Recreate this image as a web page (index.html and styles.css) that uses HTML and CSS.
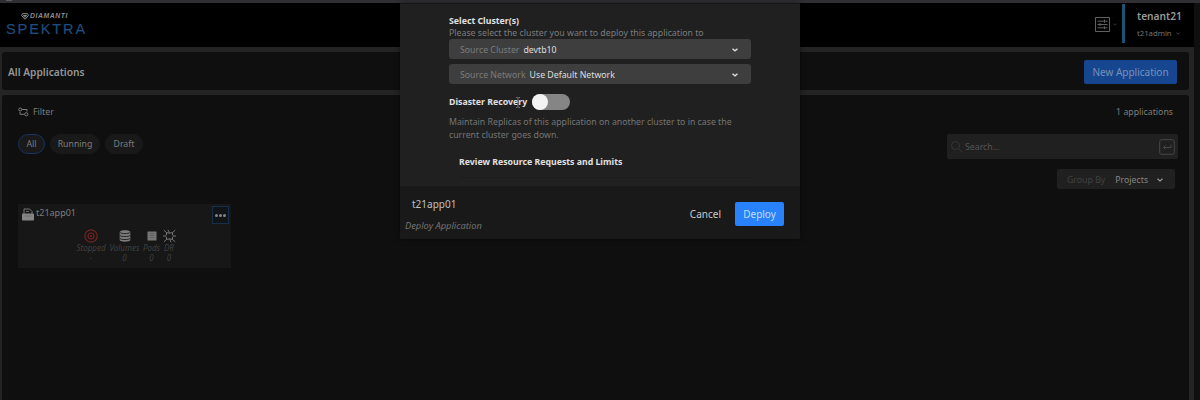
FILE: index.html
```html
<!DOCTYPE html>
<html lang="en">
<head>
<meta charset="utf-8">
<title>Spektra – All Applications</title>
<link rel="stylesheet" href="styles.css">
</head>
<body>
<div class="chrome"><i></i></div>
<div class="shell">
  <header class="topbar">
    <div class="brand">
      <div class="brand-top">
        <svg width="8" height="7" viewBox="0 0 8 7" fill="none" stroke="currentColor"><path d="M1.5 .7h5L7.4 2.5 4 6.3.6 2.5zM2.4 2.5h3.2L4 4.4z"/></svg>
        <span>DIAMANTI</span>
      </div>
      <div class="brand-name">SPEKTRA</div>
    </div>
    <div class="account">
      <svg class="tasks" width="15" height="15" viewBox="0 0 15 15" fill="none" stroke="currentColor"><path d="M.5.5h14v14H.5zM2.5 4.2h10M2.5 7.5h10M2.5 10.8h10M9.5 2.7v3M5 6v3M9.5 9.3v3"/></svg>
      <svg class="caret" width="4" height="3" viewBox="0 0 4 3" fill="none" stroke="currentColor"><path d="M.3 .7L2 2l1.700-1.300"/></svg>
      <div class="user">
        <div class="tenant">tenant21</div>
        <div class="admin">t21admin <svg width="4" height="3" viewBox="0 0 4 3" fill="none" stroke="currentColor"><path d="M.3 .7L2 2l1.700-1.300"/></svg></div>
      </div>
    </div>
  </header>

  <section class="panel titlebar">
    <h1>All Applications</h1>
    <button class="new-app">New Application</button>
  </section>

  <main class="panel content">
    <div class="filter-row">
      <div class="filter">
        <svg width="11" height="10" viewBox="0 0 11 10" fill="none" stroke="currentColor"><circle cx="2.200" cy="2.500" r="1.500"/><path d="M3.700 2.500H9v2M2 5v2.300h4.500"/><circle cx="8.300" cy="7.300" r="1.600"/></svg>
        <span>Filter</span>
      </div>
      <span class="count">1 applications</span>
    </div>
    <div class="search-row">
      <div class="chips">
        <span class="chip chip-all">All</span>
        <span class="chip chip-running">Running</span>
        <span class="chip chip-draft">Draft</span>
      </div>
      <div class="search">
        <svg width="14" height="14" viewBox="0 0 14 14" fill="none" stroke="#353535"><circle cx="5.500" cy="5.500" r="4"/><path d="M8.500 8.500l4 4"/></svg>
        <span>Search...</span>
        <svg class="enter" width="16" height="16" viewBox="0 0 16 16" fill="none" stroke="#474747"><rect x=".7" y=".7" width="14.600" height="14.600" rx="2"/><path d="M12 5.500v3H4.500M6.500 6.500l-2 2 2 2"/></svg>
      </div>
    </div>
    <div class="group-row">
      <div class="group-by"><span class="dim">Group By</span><span class="projects">Projects</span>
        <svg width="8" height="6" viewBox="0 0 8 6" fill="none" stroke="currentColor" stroke-width="1.200"><path d="M1.500 1.800L4 3.900l2.500-2.100"/></svg>
      </div>
    </div>
    <article class="card">
      <div class="card-head">
        <svg width="12" height="13" viewBox="0 0 12 13"><path d="M2 6V1h5.500L10 3.500V6" fill="none" stroke="#777"/><path d="M4 3.500h3" stroke="#666"/><rect x="0" y="5.500" width="12" height="7" rx="1" fill="#858585"/><path d="M2.500 8h7" stroke="#6c6c6c"/></svg>
        <span class="app-name">t21app01</span>
        <span class="more"><i></i><i></i><i></i></span>
      </div>
      <div class="stats">
        <div class="stat s-stopped">
          <svg width="14" height="14" viewBox="0 0 14 14" fill="none" stroke="#742324" stroke-width="1.200"><circle cx="7" cy="7" r="6.200"/><circle cx="7" cy="7" r="3"/><rect x="6.500" y="6.500" width="1" height="1" stroke="#601f1f" stroke-width="1"/></svg>
          <em>Stopped</em><em>-</em>
        </div>
        <div class="stat s-volumes">
          <svg width="12" height="14" viewBox="0 0 12 14"><path d="M.7 3c0-2.200 10.600-2.200 10.600 0v8c0 2.200-10.600 2.200-10.600 0z" fill="#7c7c7c"/><path d="M1 3.400c1 1.600 9 1.600 10 0M1 6.400c1 1.500 9 1.500 10 0M1 9.400c1 1.500 9 1.500 10 0" fill="none" stroke="#222"/></svg>
          <em>Volumes</em><em>0</em>
        </div>
        <div class="stat s-pods">
          <svg width="10" height="14" viewBox="0 0 10 14"><rect x=".5" y="2.500" width="9" height="9" fill="#777"/><path d="M2.500 4.500h5M2.500 6.500h5M2.500 8.500h5" stroke="#5b5b5b" stroke-width=".8"/></svg>
          <em>Pods</em><em>0</em>
        </div>
        <div class="stat s-dr">
          <svg width="13" height="14" viewBox="0 0 13 14" fill="none" stroke="#747474"><path d="M3.500 3.500l3 .7 3-.7v2.500l1.200 1-1.200 1v2.500l-3-.7-3 .7V8L2.300 7l1.200-1zM.8 1.200l2.700 2.300M12.200 1.200L9.500 3.500M.8 12.800l2.700-2.300M12.200 12.800l-2.700-2.300M0 7h2.300M10.700 7H13M5 .8l1.500 3.400M8 13.200L6.500 9.800"/></svg>
          <em>DR</em><em>0</em>
        </div>
      </div>
    </article>
  </main>
</div>

<div class="modal">
  <div class="modal-body">
    <h2 class="cluster-title">Select Cluster(s)</h2>
    <p class="cluster-help">Please select the cluster you want to deploy this application to</p>
    <div class="select"><span class="label">Source Cluster</span><span class="value">devtb10</span>
      <svg width="8" height="6" viewBox="0 0 8 6" fill="none" stroke="currentColor" stroke-width="1.400"><path d="M1.500 1.800L4 3.900l2.500-2.100"/></svg></div>
    <div class="select"><span class="label">Source Network</span><span class="value">Use Default Network</span>
      <svg width="8" height="6" viewBox="0 0 8 6" fill="none" stroke="currentColor" stroke-width="1.400"><path d="M1.500 1.800L4 3.900l2.500-2.100"/></svg></div>
    <div class="recovery">
      <h2>Disaster Recovery</h2><span class="toggle"></span>
      <svg class="cursor" width="6" height="11" viewBox="0 0 6 11" fill="none" stroke="#777"><path d="M1 .5h1.300L3 1.200 3.700.5H5M3 1v9M1 10.500h1.300L3 9.800l.7.7H5"/></svg>
    </div>
    <p class="recovery-help">Maintain Replicas of this application on another cluster to in case the<br>current cluster goes down.</p>
    <h2 class="review">Review Resource Requests and Limits</h2>
    <div class="rule"></div>
  </div>
  <footer class="modal-foot">
    <div class="summary"><div class="sum-name">t21app01</div><div class="sum-action">Deploy Application</div></div>
    <div class="actions"><button class="cancel">Cancel</button><button class="deploy">Deploy</button></div>
  </footer>
</div>
</body>
</html>
```

FILE: styles.css
```css
* { box-sizing: border-box; }
body {
  margin: 0;
  width: 1200px;
  height: 400px;
  overflow: hidden;
  background: #0f0f0f;
  font-family: "Noto Sans", "Open Sans", sans-serif;
  font-size: 8.75px;
  color: #7c7c7c;
}
h1, h2, p { margin: 0; }
button { border: 0; padding: 0; margin: 0; font: inherit; }
svg { display: block; flex: none; }

.chrome { height: 3px; background: #303033; padding-left: 6px; }
.chrome i { display: block; width: 6px; height: 1px; background: #5c5c5f; }
.shell { width: 1194px; height: 397px; background: #242425; display: flex; flex-direction: column; }

.topbar { height: 44px; background: #000; display: flex; justify-content: space-between; flex: none; }
.brand { padding: 8px 0 0 6px; }
.brand-top { display: flex; align-items: center; height: 10px; padding-left: 15px; gap: 1px; color: #8c8c8c; }
.brand-top span { font: italic bold 6.8px/10px "Liberation Sans", sans-serif; letter-spacing: 0.6px; }
.brand-name { font: 14.5px/16px "Liberation Sans", sans-serif; letter-spacing: 1.9px; color: #1f4c7c; -webkit-text-stroke: 0.2px #1f4c7c; }
.account { display: flex; align-items: flex-start; padding-top: 1px; color: #606060; }
.tasks { margin-top: 13px; color: #606060; }
.caret { margin: 19px 0 0 3px; opacity: .5; }
.user { width: 72px; height: 39px; margin-left: 5px; border-left: 3px solid #1d5270; padding: 5px 0 0 12px; }
.tenant { font-size: 10.2px; font-weight: 600; line-height: 15px; color: #989898; }
.admin { display: flex; align-items: center; gap: 4px; font-size: 7.8px; line-height: 19px; color: #747474; letter-spacing: -.05px; }
.admin svg { opacity: .5; }

.panel { background: #0f0f0f; border-radius: 3px; margin-left: 2px; width: 1187px; }
.titlebar { height: 38px; flex: none; margin-top: 5px; display: flex; align-items: center; justify-content: space-between; padding: 2px 12px 0 6px; }
h1 { font-size: 10.2px; font-weight: 600; color: #959595; }
.new-app { width: 93px; height: 24px; border-radius: 2px; background: #174690; color: #7891b7; font-size: 10px; }

.content { flex: 1; margin-top: 5px; border-radius: 3px 3px 0 0; padding: 8px 11px 0 16px; }
.filter-row { height: 18px; display: flex; align-items: center; justify-content: space-between; }
.filter { display: flex; align-items: center; gap: 4px; }
.count { padding-right: 5px; }
.search-row { display: flex; justify-content: space-between; margin-top: 13px; }
.chips { display: flex; gap: 5px; }
.chip { height: 20px; line-height: 18px; border-radius: 10px; background: #191919; border: 1px solid #191919; text-align: center; }
.chip-all { width: 27px; border-color: #1b3360; }
.chip-running { width: 50px; }
.chip-draft { width: 38px; }
.search { width: 231px; height: 25px; border-radius: 2px; background: #202020; color: #555; display: flex; align-items: center; padding: 0 3px; }
.search span { margin-left: 1px; }
.enter { margin-left: auto; }
.group-row { display: flex; justify-content: flex-end; margin-top: 10px; padding-right: 3px; }
.group-by { width: 118px; height: 20px; border-radius: 2px; background: #202020; display: flex; align-items: center; gap: 10px; padding: 1px 0 0 10px; }
.dim { color: #414141; }
.projects { color: #858585; }
.group-by svg { margin-left: -2px; color: #999; }

.card { width: 213px; height: 64px; margin-top: 15px; background: #171717; }
.card-head { display: flex; height: 22px; padding: 2px 2px 0 4px; align-items: flex-start; }
.card-head > svg { margin-top: 2px; }
.app-name { margin-left: 2px; font-size: 9px; line-height: 14px; }
.more { width: 17px; height: 18px; margin-left: auto; border: 1px solid #172f4a; background: #101416; display: flex; justify-content: center; align-items: center; gap: 1px; padding-top: 1px; }
.more i { width: 3px; height: 3px; border-radius: 50%; background: #858585; }
.stats { display: flex; padding: 3px 0 0 57px; }
.stat { display: flex; flex-direction: column; align-items: center; color: #404040; font-size: 8px; }
.stat em { line-height: 10px; }
.s-stopped { width: 32px; }
.s-volumes { width: 35px; }
.s-pods { width: 19px; }
.s-dr { width: 16px; }

.modal { position: absolute; left: 400px; top: 3px; width: 400px; height: 236px; background: #202020; border-top: 1px solid #151515; display: flex; flex-direction: column; box-shadow: 0 0 5px rgba(0, 0, 0, .5); }
.modal-body { height: 182px; padding: 10px 49px 0; }
h2 { font-size: 8.75px; font-weight: 700; line-height: 13px; color: #e0e0e0; white-space: nowrap; }
.cluster-title { line-height: 14px; }
.cluster-help { line-height: 11px; white-space: nowrap; color: #7c7c7c; }
.select { width: 302px; height: 20px; border-radius: 3px; background: #3e3e3e; display: flex; align-items: center; padding: 1px 12px 0 11px; margin-bottom: 5px; }
.select .label { color: #7c7c7c; }
.select .value { margin-left: 4px; color: #dedede; }
.select svg { margin-left: auto; color: #ddd; }
.recovery { position: relative; display: flex; align-items: center; height: 18px; margin-top: 9px; }
.toggle { width: 38px; height: 16px; margin-left: 5px; border-radius: 8px; background: #858585; }
.toggle::before { content: ""; display: block; width: 16px; height: 16px; border-radius: 50%; background: #f3f3f3; }
.cursor { position: absolute; left: 66px; top: 4px; }
.recovery-help { margin-top: 5px; line-height: 13px; color: #757575; white-space: nowrap; }
.review { margin: 14px 0 0 10px; }
.rule { height: 1px; margin: 8px 0 0 10px; background: #1c1c1c; }
.modal-foot { flex: 1; background: #191919; display: flex; justify-content: space-between; padding: 10px 16px 0 5px; }
.sum-name { font-size: 10px; line-height: 17px; padding-left: 7px; color: #c0c0c0; }
.sum-action { font-size: 9.3px; font-style: italic; line-height: 14px; margin-top: 6px; color: #727272; }
.actions { display: flex; align-items: center; height: 24px; margin-top: 6px; gap: 14px; }
.cancel { background: none; color: #c8c8c8; font-size: 10px; }
.deploy { width: 49px; height: 24px; border-radius: 2px; background: #2782fb; color: #c3ddff; font-size: 10px; }
```
